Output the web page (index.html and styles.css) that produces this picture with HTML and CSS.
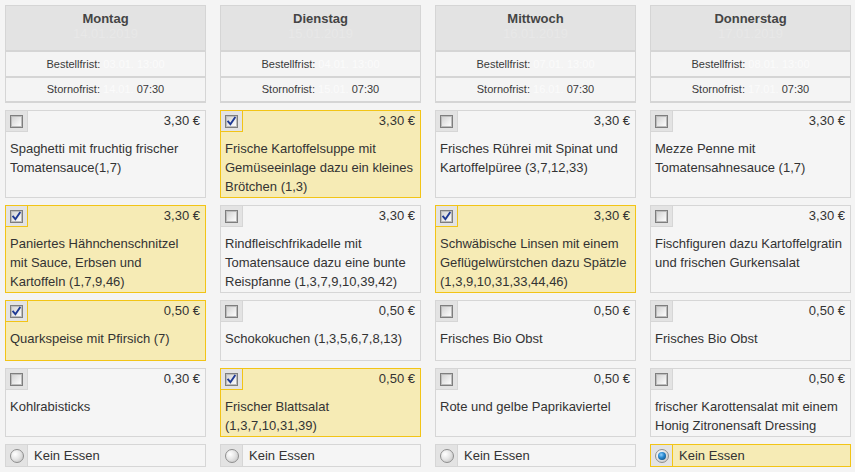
FILE: index.html
```html
<!DOCTYPE html>
<html lang="de">
<head>
<meta charset="utf-8">
<title>Speiseplan</title>
<link rel="stylesheet" href="styles.css">
</head>
<body>
<div class="plan">
  <div class="day">
    <div class="day-title"><div class="day-name">Montag</div><div class="day-date">14.01.2019</div></div>
    <div class="day-row sep">Bestellfrist: <span class="faint">03.01. 13:00</span></div>
    <div class="day-row">Stornofrist: <span class="faint">14.01.</span> 07:30</div>
  </div>
  <div class="day">
    <div class="day-title"><div class="day-name">Dienstag</div><div class="day-date">15.01.2019</div></div>
    <div class="day-row sep">Bestellfrist: <span class="faint">04.01. 13:00</span></div>
    <div class="day-row">Stornofrist: <span class="faint">15.01.</span> 07:30</div>
  </div>
  <div class="day">
    <div class="day-title"><div class="day-name">Mittwoch</div><div class="day-date">16.01.2019</div></div>
    <div class="day-row sep">Bestellfrist: <span class="faint">07.01. 13:00</span></div>
    <div class="day-row">Stornofrist: <span class="faint">16.01.</span> 07:30</div>
  </div>
  <div class="day">
    <div class="day-title"><div class="day-name">Donnerstag</div><div class="day-date">17.01.2019</div></div>
    <div class="day-row sep">Bestellfrist: <span class="faint">08.01. 13:00</span></div>
    <div class="day-row">Stornofrist: <span class="faint">17.01.</span> 07:30</div>
  </div>

  <!-- row 1 -->
  <div class="meal">
    <div class="meal-top"><div class="cell"><span class="cb"></span></div><div class="price">3,30 €</div></div>
    <div class="desc">Spaghetti mit fruchtig frischer Tomatensauce(1,7)</div>
  </div>
  <div class="meal on">
    <div class="meal-top"><div class="cell"><span class="cb"><svg viewBox="0 0 11 11" class="tick"><path d="M2.2 5.6 L4.4 8.2 L8.8 1.8" fill="none" stroke="#1f3a94" stroke-width="1.9" stroke-linecap="square"/></svg></span></div><div class="price">3,30 €</div></div>
    <div class="desc">Frische Kartoffelsuppe mit Gemüseeinlage dazu ein kleines Brötchen (1,3)</div>
  </div>
  <div class="meal">
    <div class="meal-top"><div class="cell"><span class="cb"></span></div><div class="price">3,30 €</div></div>
    <div class="desc">Frisches Rührei mit Spinat und Kartoffelpüree (3,7,12,33)</div>
  </div>
  <div class="meal">
    <div class="meal-top"><div class="cell"><span class="cb"></span></div><div class="price">3,30 €</div></div>
    <div class="desc">Mezze Penne mit<br>Tomatensahnesauce (1,7)</div>
  </div>

  <!-- row 2 -->
  <div class="meal on">
    <div class="meal-top"><div class="cell"><span class="cb"><svg viewBox="0 0 11 11" class="tick"><path d="M2.2 5.6 L4.4 8.2 L8.8 1.8" fill="none" stroke="#1f3a94" stroke-width="1.9" stroke-linecap="square"/></svg></span></div><div class="price">3,30 €</div></div>
    <div class="desc">Paniertes Hähnchenschnitzel<br>mit Sauce, Erbsen und<br>Kartoffeln (1,7,9,46)</div>
  </div>
  <div class="meal">
    <div class="meal-top"><div class="cell"><span class="cb"></span></div><div class="price">3,30 €</div></div>
    <div class="desc">Rindfleischfrikadelle mit Tomatensauce dazu eine bunte Reispfanne (1,3,7,9,10,39,42)</div>
  </div>
  <div class="meal on">
    <div class="meal-top"><div class="cell"><span class="cb"><svg viewBox="0 0 11 11" class="tick"><path d="M2.2 5.6 L4.4 8.2 L8.8 1.8" fill="none" stroke="#1f3a94" stroke-width="1.9" stroke-linecap="square"/></svg></span></div><div class="price">3,30 €</div></div>
    <div class="desc">Schwäbische Linsen mit einem Geflügelwürstchen dazu Spätzle (1,3,9,10,31,33,44,46)</div>
  </div>
  <div class="meal">
    <div class="meal-top"><div class="cell"><span class="cb"></span></div><div class="price">3,30 €</div></div>
    <div class="desc">Fischfiguren dazu Kartoffelgratin und frischen Gurkensalat</div>
  </div>

  <!-- row 3 -->
  <div class="meal short on">
    <div class="meal-top"><div class="cell"><span class="cb"><svg viewBox="0 0 11 11" class="tick"><path d="M2.2 5.6 L4.4 8.2 L8.8 1.8" fill="none" stroke="#1f3a94" stroke-width="1.9" stroke-linecap="square"/></svg></span></div><div class="price">0,50 €</div></div>
    <div class="desc">Quarkspeise mit Pfirsich (7)</div>
  </div>
  <div class="meal short">
    <div class="meal-top"><div class="cell"><span class="cb"></span></div><div class="price">0,50 €</div></div>
    <div class="desc">Schokokuchen (1,3,5,6,7,8,13)</div>
  </div>
  <div class="meal short">
    <div class="meal-top"><div class="cell"><span class="cb"></span></div><div class="price">0,50 €</div></div>
    <div class="desc">Frisches Bio Obst</div>
  </div>
  <div class="meal short">
    <div class="meal-top"><div class="cell"><span class="cb"></span></div><div class="price">0,50 €</div></div>
    <div class="desc">Frisches Bio Obst</div>
  </div>

  <!-- row 4 -->
  <div class="meal">
    <div class="meal-top"><div class="cell"><span class="cb"></span></div><div class="price">0,30 €</div></div>
    <div class="desc">Kohlrabisticks</div>
  </div>
  <div class="meal on">
    <div class="meal-top"><div class="cell"><span class="cb"><svg viewBox="0 0 11 11" class="tick"><path d="M2.2 5.6 L4.4 8.2 L8.8 1.8" fill="none" stroke="#1f3a94" stroke-width="1.9" stroke-linecap="square"/></svg></span></div><div class="price">0,50 €</div></div>
    <div class="desc">Frischer Blattsalat (1,3,7,10,31,39)</div>
  </div>
  <div class="meal">
    <div class="meal-top"><div class="cell"><span class="cb"></span></div><div class="price">0,50 €</div></div>
    <div class="desc">Rote und gelbe Paprikaviertel</div>
  </div>
  <div class="meal">
    <div class="meal-top"><div class="cell"><span class="cb"></span></div><div class="price">0,50 €</div></div>
    <div class="desc">frischer Karottensalat mit einem Honig Zitronensaft Dressing</div>
  </div>

  <!-- row 5 -->
  <div class="none"><div class="cell"><span class="radio"></span></div><div class="none-label">Kein Essen</div></div>
  <div class="none"><div class="cell"><span class="radio"></span></div><div class="none-label">Kein Essen</div></div>
  <div class="none"><div class="cell"><span class="radio"></span></div><div class="none-label">Kein Essen</div></div>
  <div class="none on"><div class="cell"><span class="radio checked"></span></div><div class="none-label">Kein Essen</div></div>
</div>
</body>
</html>
```

FILE: styles.css
```css
html, body {
  margin: 0;
  padding: 0;
  background: #f4f4f4;
}
body {
  padding: 5px 0 0 5px;
  font-family: "Liberation Sans", Arial, sans-serif;
  color: #333;
}
.plan {
  display: grid;
  grid-template-columns: repeat(4, 201px);
  column-gap: 14px;
  row-gap: 7px;
  align-items: stretch;
}

/* day header */
.day {
  border: 1px solid #d5d5d5;
  border-bottom-width: 2px;
  background: #f4f4f4;
  box-sizing: border-box;
  height: 98px;
  display: flex;
  flex-direction: column;
}
.day-title {
  background: #e3e3e3;
  border-bottom: 2px solid #d5d5d5;
  text-align: center;
  padding-top: 5px;
  height: 39px;
}
.day-name {
  font-weight: bold;
  font-size: 13px;
  line-height: 15px;
  color: #454545;
}
.day-date {
  font-size: 13px;
  line-height: 15px;
  color: #e8e8e8;
}
.day-row {
  flex: 1;
  font-size: 11px;
  line-height: 23px;
  text-align: center;
  color: #3a3a3a;
}
.day-row.sep {
  border-bottom: 2px solid #d5d5d5;
  flex: none;
  height: 24px;
  line-height: 24px;
}
.faint {
  color: #fbfbfb;
}

/* meal cards */
.meal {
  border: 1px solid #d6d6d6;
  background: #f5f5f5;
  box-sizing: border-box;
  display: flex;
  flex-direction: column;
  padding-bottom: 1px;
}
.meal.short {
  min-height: 61px;
}
.meal.on {
  background: #f6ebb5;
  border-color: #f2c416;
}
.meal-top {
  display: flex;
  height: 21px;
}
.cell {
  width: 21px;
  height: 20px;
  background: #e3e3e3;
  border-right: 1px solid #d6d6d6;
  border-bottom: 1px solid #d6d6d6;
  display: flex;
  align-items: center;
  justify-content: center;
  flex: none;
}
.on .cell {
  border-color: #f2c416;
}
.cb {
  width: 11px;
  height: 11px;
  border: 1px solid #7e7e7e;
  box-shadow: inset 0 0 0 1px #bdbdbd;
  background: linear-gradient(135deg, #cfcfcf 0%, #f2f2f2 70%, #ffffff 100%);
  display: block;
  position: relative;
  margin-top: 1px;
}
.tick {
  position: absolute;
  left: 0;
  top: 0;
  width: 11px;
  height: 11px;
}
.price {
  flex: 1;
  text-align: right;
  font-size: 13px;
  line-height: 20px;
  padding-right: 5px;
  color: #333;
}
.desc {
  margin-top: 7px;
  padding: 0 4px;
  font-size: 13px;
  line-height: 19px;
  color: #333;
}

/* no meal row */
.none {
  display: flex;
  border: 1px solid #d6d6d6;
  background: #f5f5f5;
  height: 23px;
  box-sizing: border-box;
}
.none.on {
  background: #f6ebb5;
  border-color: #f2c416;
}
.none .cell {
  height: 21px;
  border-bottom: none;
}
.radio {
  width: 12px;
  height: 12px;
  border-radius: 50%;
  border: 1px solid #8f8f8f;
  background: radial-gradient(circle at 35% 35%, #ffffff 0%, #e6e6e6 45%, #bdbdbd 100%);
  display: block;
  position: relative;
}
.radio.checked::after {
  content: "";
  position: absolute;
  left: 2px;
  top: 2px;
  width: 8px;
  height: 8px;
  border-radius: 50%;
  background: radial-gradient(circle at 40% 35%, #8fd0ff 0%, #2a8ad0 40%, #0a3e6e 100%);
}
.none-label {
  padding-left: 6px;
  font-size: 13px;
  line-height: 21px;
  color: #333;
}
```
